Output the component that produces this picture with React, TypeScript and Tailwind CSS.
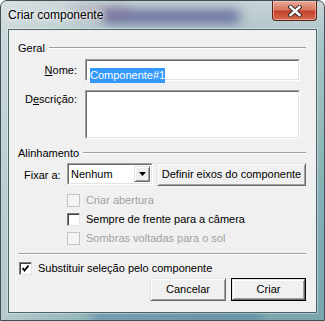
import React from 'react'

const font = "font-['Liberation_Sans',Arial,sans-serif]"

function Sunken({ className = '', children }: { className?: string; children?: React.ReactNode }) {
  return (
    <div className={`border border-t-[#a0a0a0] border-l-[#a0a0a0] border-r-white border-b-white ${className}`}>
      <div className="h-full w-full border border-t-[#696969] border-l-[#696969] border-r-[#e3e3e3] border-b-[#e3e3e3] bg-white">
        {children}
      </div>
    </div>
  )
}

function Raised({ className = '', children }: { className?: string; children?: React.ReactNode }) {
  return (
    <div className={`border border-t-[#e3e3e3] border-l-[#e3e3e3] border-r-[#696969] border-b-[#696969] bg-[#f0f0f0] shadow-[inset_1px_1px_0_#ffffff,inset_-1px_-1px_0_#a0a0a0] ${className}`}>
      {children}
    </div>
  )
}

function Button({ label, width, isDefault = false }: { label: string; width: string; isDefault?: boolean }) {
  const face = (
    <Raised className="flex h-full w-full items-center justify-center text-[11px] text-black">{label}</Raised>
  )
  return isDefault ? (
    <div className={`h-[23px] border border-black ${width}`}>{face}</div>
  ) : (
    <div className={`h-[23px] ${width}`}>{face}</div>
  )
}

function Check({ label, checked = false, disabled = false }: { label: string; checked?: boolean; disabled?: boolean }) {
  return (
    <div className="flex items-center gap-[6px]">
      {disabled ? (
        <div className="h-[13px] w-[13px] border border-[#c4c4c4] bg-[#f4f4f4]" />
      ) : (
        <div className="flex h-[13px] w-[13px] items-center justify-center border border-t-[#808080] border-l-[#808080] border-r-[#e3e3e3] border-b-[#e3e3e3] bg-white shadow-[inset_1px_1px_0_#404040]">
          {checked && (
            <svg width="9" height="9" viewBox="0 0 9 9">
              <path d="M1.5 4 L3.5 6.5 L7.5 1.5" fill="none" stroke="#000" strokeWidth="1.8" />
            </svg>
          )}
        </div>
      )}
      <span className={`text-[11px] ${disabled ? 'text-[#a0a0a0]' : 'text-black'}`}>{label}</span>
    </div>
  )
}

function GroupTitle({ label }: { label: string }) {
  return (
    <div className="flex h-[14px] items-center gap-[4px]">
      <span className="text-[11px] text-black">{label}</span>
      <div className="h-[2px] flex-1 border-t border-t-[#a0a0a0] border-b border-b-white" />
    </div>
  )
}

export default function App() {
  return (
    <div className={`${font} relative h-[321px] w-[325px] overflow-hidden rounded-t-[7px] border border-[#3f4f55] bg-[linear-gradient(to_bottom,#c8d3d6_0%,#a9c5c8_12%,#86b0b5_60%,#7aa6ac_100%)]`}>
      {/* glass tint and streaks */}
      <div className="absolute inset-0 bg-[linear-gradient(to_right,rgba(230,232,234,0.55)_0%,rgba(200,215,218,0.25)_30%,rgba(150,195,196,0)_70%)]" />
      <div className="absolute left-[100px] top-[9px] h-[13px] w-[140px] rounded-full bg-[#3e3f86] opacity-70 blur-[6px]" />
      <div className="absolute left-[70px] top-[6px] h-[10px] w-[60px] rounded-full bg-[#8a6a8a] opacity-40 blur-[6px]" />
      <div className="absolute bottom-[0px] left-[90px] h-[7px] w-[170px] rounded-full bg-[#4e74a4] opacity-60 blur-[4px]" />

      <div className="relative flex h-full flex-col">
        {/* title bar */}
        <div className="flex h-[28px] items-start">
          <span className="ml-[7px] mt-[7px] text-[12px] leading-[15px] text-black [text-shadow:0_0_6px_#ffffff,0_0_3px_#ffffff]">
            Criar componente
          </span>
          <div className="ml-auto mr-[7px] flex h-[20px] w-[45px] items-center justify-center rounded-b-[4px] border border-t-0 border-[#5a2418] bg-[linear-gradient(to_bottom,#e9a899_0%,#d7785f_45%,#c4402a_55%,#d36b4c_100%)] shadow-[inset_0_0_0_1px_rgba(255,220,210,0.5)]">
            <svg width="14" height="12" viewBox="0 0 14 12">
              <path d="M2.5 2 L11.5 10 M11.5 2 L2.5 10" stroke="#3a2a2a" strokeWidth="4.4" strokeLinecap="square" />
              <path d="M2.5 2 L11.5 10 M11.5 2 L2.5 10" stroke="#ffffff" strokeWidth="2.4" strokeLinecap="square" />
            </svg>
          </div>
        </div>

        {/* client panel */}
        <div className="mx-[7px] h-[284px] border border-[#4d6468] bg-[#f0f0f0] pl-[9px] pr-[10px] pt-[11px] shadow-[0_0_0_1px_rgba(255,255,255,0.35)]">
          <GroupTitle label="Geral" />

          <div className="mt-[4px] flex h-[22px] items-center">
            <div className="w-[59px] text-right text-[11px] text-black">
              <span className="underline">N</span>ome:
            </div>
            <Sunken className="ml-[8px] h-[22px] w-[215px]">
              <div className="pl-[3px] pt-[1px]">
                <span className="inline-block bg-[#3399ff] text-[11px] leading-[15px] text-white">Componente#1</span>
              </div>
            </Sunken>
          </div>

          <div className="mt-[9px] flex h-[49px] items-start">
            <div className="w-[59px] pt-[1px] text-right text-[11px] text-black">
              D<span className="underline">e</span>scrição:
            </div>
            <Sunken className="ml-[8px] h-[49px] w-[215px]" />
          </div>

          <div className="mt-[7px]">
            <GroupTitle label="Alinhamento" />
          </div>

          <div className="mt-[3px] flex h-[23px] items-start">
            <span className="ml-[6px] mt-[4px] w-[43px] text-[11px] text-black">Fixar a:</span>
            <Sunken className="h-[22px] w-[86px]">
              <div className="flex h-full items-center">
                <span className="flex-1 pl-[2px] text-[11px] text-black">Nenhum</span>
                <Raised className="mr-[1px] flex h-[16px] w-[16px] items-center justify-center">
                  <svg width="7" height="4" viewBox="0 0 7 4">
                    <path d="M0 0 H7 L3.5 4 Z" fill="#000" />
                  </svg>
                </Raised>
              </div>
            </Sunken>
            <div className="ml-[4px]">
              <Button label="Definir eixos do componente" width="w-[149px]" />
            </div>
          </div>

          <div className="mt-[5px] flex flex-col pl-[49px]">
            <div className="flex h-[19px] items-center">
              <Check label="Criar abertura" disabled />
            </div>
            <div className="flex h-[19px] items-center">
              <Check label="Sempre de frente para a câmera" />
            </div>
            <div className="flex h-[19px] items-center">
              <Check label="Sombras voltadas para o sol" disabled />
            </div>
          </div>

          <div className="mt-[5px] h-[2px] border-t border-t-[#a0a0a0] border-b border-b-white" />

          <div className="mt-[5px] flex h-[17px] items-center pl-[1px]">
            <Check label="Substituir seleção pelo componente" checked />
          </div>

          <div className="mt-[1px] flex justify-end gap-[5px]">
            <Button label="Cancelar" width="w-[76px]" />
            <Button label="Criar" width="w-[75px]" isDefault />
          </div>
        </div>
      </div>
    </div>
  )
}
